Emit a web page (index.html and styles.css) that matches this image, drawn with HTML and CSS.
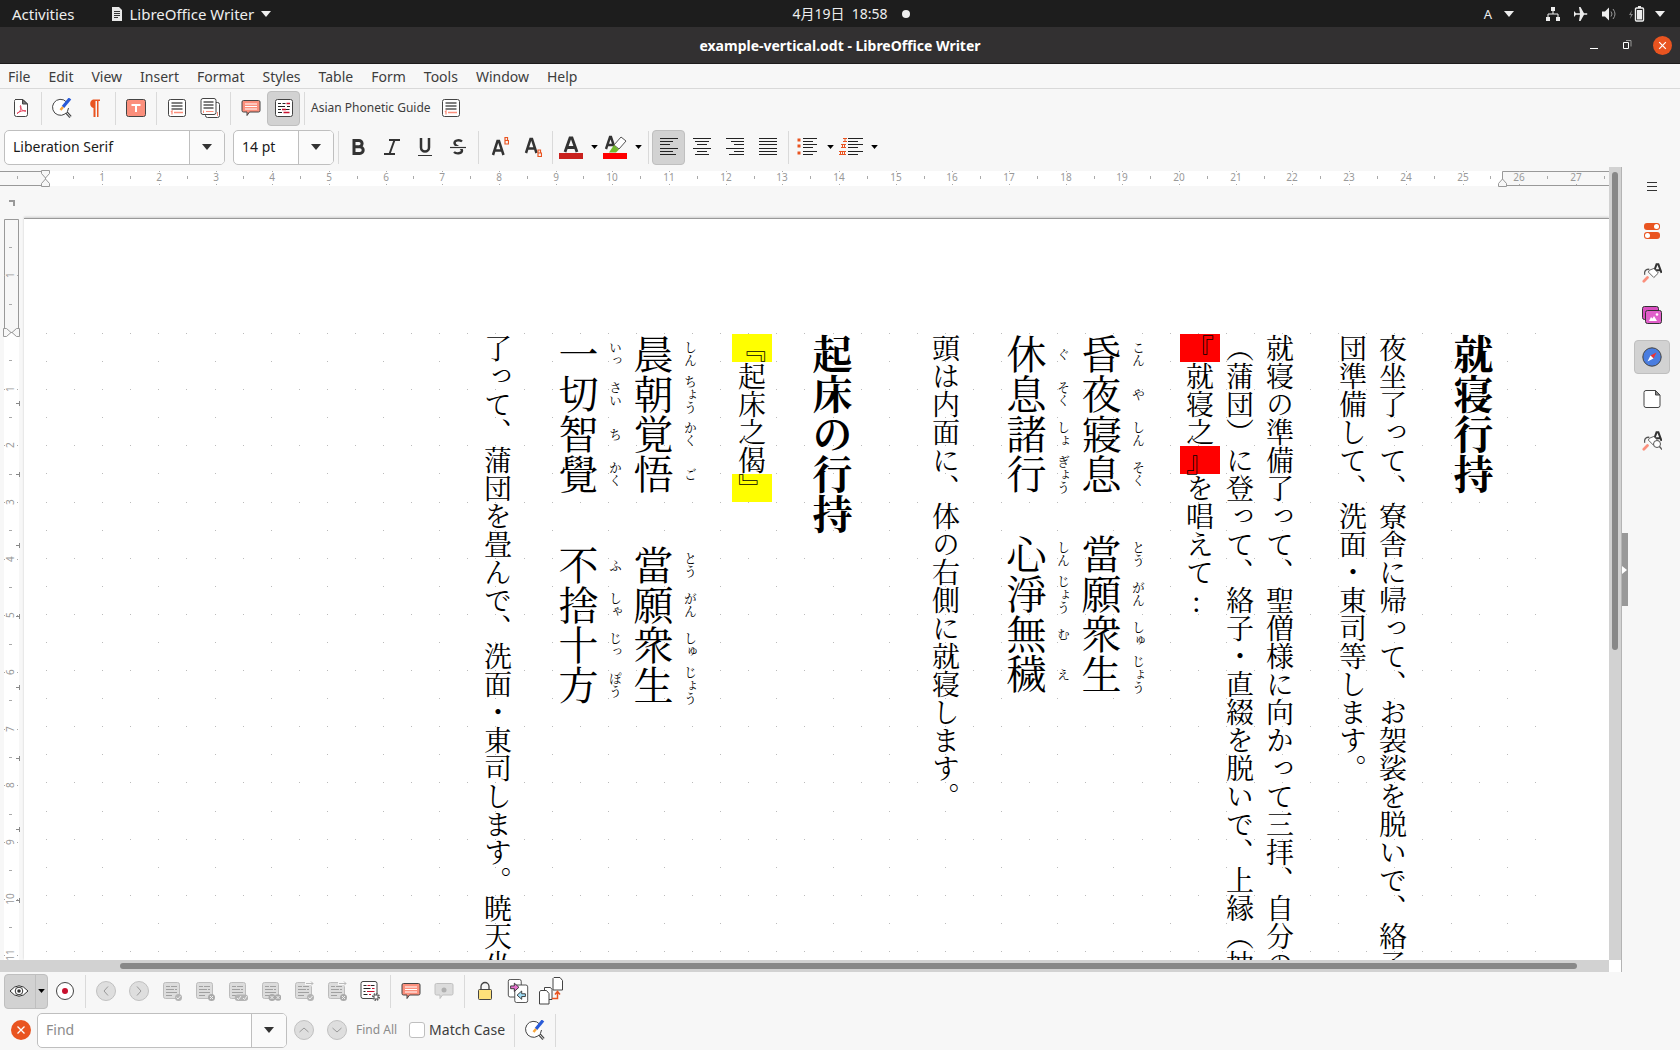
FILE: index.html
```html
<!DOCTYPE html>
<html lang="ja">
<head>
<meta charset="utf-8">
<title>example-vertical.odt - LibreOffice Writer</title>
<link rel="stylesheet" href="styles.css">
</head>
<body>
<svg class="defs" aria-hidden="true">
  <symbol id="i-pdf" viewBox="0 0 20 20"><path d="M4 1.500h8l4.500 4.500v10.500a2 2 0 0 1-2 2h-9a2 2 0 0 1-2-2v-13a2 2 0 0 1 1-2z" fill="#fff" stroke="#444"/><path d="M11.500 1.500v4.500h5z" fill="#777" stroke="#444"/><path d="M6 15.500c4-2 4.500-6 3.500-8c-1 2 1.500 6 5.500 5.500c-3-1-7 .5-9 2.500z" fill="none" stroke="#e33b57"/></symbol>
  <symbol id="i-find" viewBox="0 0 20 20"><path d="M14.500 4a8 8 0 1 0 2 6" fill="#fff" stroke="#444"/><path d="M14.500 14.500l4 4.500" stroke="#444" stroke-width="3"/><path d="M14.500 14.500l4 4.500" stroke="#eee" stroke-width="1"/><path d="M11 9l7-8.500" stroke="#2a5bd7" stroke-width="3.200"/><path d="M8.500 12l2.500-3" stroke="#f8a63a" stroke-width="2.500"/></symbol>
  <symbol id="i-pilcrow" viewBox="0 0 20 20"><path d="M8 1.500h7v1.500h-1.500v16h-1.500v-16h-1.500v16h-2v-9a4.500 4.500 0 0 1-.5-8.500z" fill="#e95420"/></symbol>
  <symbol id="i-textbox" viewBox="0 0 20 20"><rect x=".5" y="1.500" width="19" height="17" rx="2" fill="#fb8f7c" stroke="#444"/><path d="M5.500 7h9M10 7v7" stroke="#fff" stroke-width="2"/></symbol>
  <symbol id="i-footnote" viewBox="0 0 20 20"><rect x="1.500" y="1.500" width="17" height="17" rx="2" fill="#fff" stroke="#444"/><path d="M4.500 5h11M4.500 8h11M4.500 11h11" stroke="#000" stroke-width="1.200"/><path d="M4 14l1-1v3.500M7 14.500h9" stroke="#fb8f7c" stroke-width="1.300" fill="none"/></symbol>
  <symbol id="i-endnote" viewBox="0 0 20 20"><rect x="5.500" y="4.500" width="14" height="15" rx="2" fill="#fff" stroke="#444"/><rect x="1" y=".5" width="15" height="16" rx="2" fill="#fff" stroke="#444"/><path d="M3.500 4h10M3.500 7h10M3.500 10h10" stroke="#000" stroke-width="1.200"/><path d="M6 13.500h7.500M17.500 14v4M3.500 12.500v2.500" stroke="#fb8f7c"/></symbol>
  <symbol id="i-comment" viewBox="0 0 20 20"><path d="M2.500 2.500h15a1.500 1.500 0 0 1 1.500 1.500v8.500a1.500 1.500 0 0 1-1.500 1.500h-9l-2.500 3.500v-3.500h-3.500a1.500 1.500 0 0 1-1.500-1.500v-8.500a1.500 1.500 0 0 1 1.500-1.500z" fill="#fb8f7c" stroke="#444"/><path d="M4 6h12M4 8.500h12M4 11h12" stroke="#fff"/></symbol>
  <symbol id="i-commentoff" viewBox="0 0 20 20"><path d="M2.500 2.500h15a1.500 1.500 0 0 1 1.500 1.500v8.500a1.500 1.500 0 0 1-1.500 1.500h-9l-2.500 3.500v-3.500h-3.500a1.500 1.500 0 0 1-1.500-1.500v-8.500a1.500 1.500 0 0 1 1.500-1.500z" fill="#dcdcdc" stroke="#c0c0c0"/><circle cx="10" cy="9" r="2.500" fill="#b0b0b0"/></symbol>
  <symbol id="i-track" viewBox="0 0 20 20"><rect x="1.500" y="1.500" width="17" height="17" rx="2" fill="#fff" stroke="#444"/><path d="M4 5.500h3M8.500 5.500h3M4 8.500h7M13 8.500h3M4 11.500h3M8.500 11.500h7M4 14.500h4" stroke="#222" stroke-width="1.200"/><path d="M12.500 5.500h3.500M8 11.500h4M9.500 14.500h6" stroke="#c8102e" stroke-width="1.300"/></symbol>
  <symbol id="i-chg" viewBox="0 0 20 20"><rect x="1.500" y="1.500" width="16" height="16" rx="2" fill="#dcdcdc" stroke="#bcbcbc"/><path d="M4 5.500h4M9 5.500h6M4 8.500h8M13 8.500h2M4 11.500h11M4 14.500h6" stroke="#a0a0a0"/></symbol>
  <symbol id="i-b1" viewBox="0 0 20 20"><use href="#i-chg"/><circle cx="16.500" cy="16.500" r="3.500" fill="#b4b4b4"/><path d="M14.500 16.500l1.500 1.500l2.500-3" stroke="#eee" fill="none"/></symbol>
  <symbol id="i-b2" viewBox="0 0 20 20"><use href="#i-chg"/><circle cx="16.500" cy="16.500" r="3.500" fill="#aaa"/><path d="M15 15l3 3M18 15l-3 3" stroke="#eee"/></symbol>
  <symbol id="i-b3" viewBox="0 0 20 20"><use href="#i-chg"/><path d="M10 20a3.200 3.200 0 0 1 0-6.500h7a3.200 3.200 0 0 1 0 6.500z" fill="#b4b4b4"/><path d="M9 17l1.500 1.500 2.500-3.500M15 17l1.500 1.500 2.500-3.500" stroke="#eee" fill="none"/></symbol>
  <symbol id="i-b4" viewBox="0 0 20 20"><use href="#i-chg"/><circle cx="11" cy="16.500" r="3.500" fill="#aaa"/><circle cx="17" cy="16.500" r="3.300" fill="#aaa"/><path d="M9.500 15l3 3M12.500 15l-3 3M15.500 15l3 3M18.500 15l-3 3" stroke="#eee"/></symbol>
  <symbol id="i-b5" viewBox="0 0 20 20"><use href="#i-b1"/><path d="M11 2.500h8M17 .5l2.500 2-2.500 2" stroke="#f7f7f7" stroke-width="3" fill="none"/><path d="M12 2.500h7M17 .5l2 2-2 2" stroke="#bbb" fill="none"/></symbol>
  <symbol id="i-b6" viewBox="0 0 20 20"><use href="#i-b2"/><path d="M11 2.500h8M17 .5l2.500 2-2.500 2" stroke="#f7f7f7" stroke-width="3" fill="none"/><path d="M12 2.500h7M17 .5l2 2-2 2" stroke="#bbb" fill="none"/></symbol>
  <symbol id="i-manage" viewBox="0 0 20 20"><rect x="1" y=".5" width="16" height="17" rx="2" fill="#fff" stroke="#444"/><path d="M3.500 4.500h3M11 4.500h3.500M3.500 7.500h7M3.500 10.500h2M3.500 13.500h4" stroke="#222" stroke-width="1.200"/><path d="M7.500 4.500h3M12 7.500h2.500M7 10.500h7.500M9 13.500h2" stroke="#c8102e" stroke-width="1.200"/><circle cx="16" cy="16" r="3" fill="#ddd" stroke="#666" stroke-width="2" stroke-dasharray="1.500 .8"/><circle cx="16" cy="16" r="2" fill="#fff" stroke="#555" stroke-width=".8"/></symbol>
  <symbol id="i-bold" viewBox="0 0 20 20"><path d="M5 3.500h5a3 3 0 0 1 0 6.200h-5zM5 9.700h5.800a3.300 3.300 0 0 1 0 6.800h-5.800z" fill="none" stroke="#333" stroke-width="3"/></symbol>
  <symbol id="i-italic" viewBox="0 0 20 20"><path d="M7 3h11M2 17h11M12.500 3l-5 14" fill="none" stroke="#333" stroke-width="2"/></symbol>
  <symbol id="i-under" viewBox="0 0 20 20"><path d="M6 1v9.500a4 4 0 0 0 8 0v-9.500" fill="none" stroke="#333" stroke-width="2.500"/><path d="M3 18.500h14" stroke="#333"/></symbol>
  <symbol id="i-strike" viewBox="0 0 20 20"><path d="M14 4.500c-2-2-7.500-1.500-7.500 1.500 0 4 7.500 3.500 7.500 7.500 0 3.500-6 3.500-8 1.500" fill="none" stroke="#333" stroke-width="2.400"/><path d="M2 10.500h16" stroke="#f7f7f7" stroke-width="3"/><path d="M2 10.500h16" stroke="#333" stroke-width="1.200"/></symbol>
  <symbol id="i-sup" viewBox="0 0 20 20"><path d="M4 18l4.500-14h1.500l4.500 14M6 13.500h7" fill="none" stroke="#333" stroke-width="2.500"/><path d="M16 .5h2.500v3h-2.500zM16 3.500h3.500v3.500h-3.500z" fill="none" stroke="#e95420" stroke-width="1.200"/></symbol>
  <symbol id="i-sub" viewBox="0 0 20 20"><path d="M4 16l4.500-14h1.500l4.500 14M6 11.500h7" fill="none" stroke="#333" stroke-width="2.500"/><path d="M16 13h2.500v3h-2.500zM16 16h3.500v3.500h-3.500z" fill="none" stroke="#e95420" stroke-width="1.200"/></symbol>
  <symbol id="i-fcolor" viewBox="0 0 24 24"><path d="M6 17l5-14h2l5 14M8 12.500h8" fill="none" stroke="#333" stroke-width="2.800"/><path d="M0 18h24v6h-24z" fill="#c9211e"/></symbol>
  <symbol id="i-hcolor" viewBox="0 0 24 24"><path d="M3 14l4-12h1l4 12M4 10h7" fill="none" stroke="#333" stroke-width="2.400"/><path d="M11 10l7-8 5 4-7 8z" fill="#fff" stroke="#555"/><path d="M6 17.500l5-7.500 5 4.500-3 3z" fill="#73b82e"/><path d="M0 18h24v6h-24z" fill="#f00"/></symbol>
  <symbol id="i-al" viewBox="0 0 20 20"><path d="M1 1.500h18M1 4.500h13M1 7.500h10M1 11.500h18M1 14.500h13M1 17.500h16" stroke="#222"/></symbol>
  <symbol id="i-ac" viewBox="0 0 20 20"><path d="M1 1.500h18M3 4.500h14M5 7.500h10M1 11.500h18M5 14.500h10M3 17.500h14" stroke="#222"/></symbol>
  <symbol id="i-ar" viewBox="0 0 20 20"><path d="M1 1.500h18M6 4.500h13M9 7.500h10M1 11.500h18M9 14.500h10M4 17.500h15" stroke="#222"/></symbol>
  <symbol id="i-aj" viewBox="0 0 20 20"><path d="M1 1.500h18M1 4.500h18M1 7.500h18M1 11.500h18M1 14.500h18M1 17.500h18" stroke="#222"/></symbol>
  <symbol id="i-bul" viewBox="0 0 20 20"><path d="M6 1.500h14M6 4.500h10M6 7.500h14M6 10.500h10M6 14.500h14M6 17.500h10" stroke="#222"/><path d="M.5 1.500h3v3h-3zM.5 7.500h3v3h-3zM.5 14.500h3v3h-3z" fill="#e95420"/></symbol>
  <symbol id="i-num" viewBox="0 0 24 24"><path d="M9 3.500h15M9 6.500h10M9 9.500h15M9 12.500h10M9 16.500h15M9 19.500h10" stroke="#222"/><path d="M4 3.500h4M4 6.500h4M6 3.500v3M2 9.500h5M2 12.500h5M3.500 9.500v3M5.500 9.500v3M0 16.500h7M0 19.500h7M1.500 16.500v3M3.500 16.500v3M5.500 16.500v3" stroke="#e95420" fill="none"/></symbol>
  <symbol id="i-eye" viewBox="0 0 20 20"><path d="M1 10q9-10.500 18 0q-9 10.500-18 0z" fill="#fff" stroke="#333"/><circle cx="10" cy="10" r="3.800" fill="#fff" stroke="#333"/><circle cx="10" cy="10" r="1.800" fill="#333"/></symbol>
  <symbol id="i-rec" viewBox="0 0 20 20"><circle cx="10" cy="10" r="8.500" fill="#fff" stroke="#444"/><circle cx="10" cy="10" r="3" fill="#c8102e"/></symbol>
  <symbol id="i-left" viewBox="0 0 20 20"><circle cx="10" cy="10" r="9.500" fill="#dedede" stroke="#c0c0c0"/><path d="M12 5.500l-4 4.500 4 4.500" fill="none" stroke="#999"/></symbol>
  <symbol id="i-right" viewBox="0 0 20 20"><circle cx="10" cy="10" r="9.500" fill="#dedede" stroke="#c0c0c0"/><path d="M8 5.500l4 4.500-4 4.500" fill="none" stroke="#999"/></symbol>
  <symbol id="i-up" viewBox="0 0 20 20"><circle cx="10" cy="10" r="9.500" fill="#dedede" stroke="#c0c0c0"/><path d="M5.500 12l4.500-4 4.500 4" fill="none" stroke="#999"/></symbol>
  <symbol id="i-down" viewBox="0 0 20 20"><circle cx="10" cy="10" r="9.500" fill="#dedede" stroke="#c0c0c0"/><path d="M5.500 8l4.500 4 4.500-4" fill="none" stroke="#999"/></symbol>
  <symbol id="i-x" viewBox="0 0 20 20"><circle cx="10" cy="10" r="10" fill="#e95420"/><path d="M6.500 6.500l7 7M13.500 6.500l-7 7" stroke="#fff" stroke-width="1.300"/></symbol>
  <symbol id="i-lock" viewBox="0 0 20 20"><path d="M6 9v-3.500a4 4 0 0 1 8 0v3.500" fill="none" stroke="#444" stroke-width="1.300"/><rect x="3.500" y="8.500" width="13" height="10" rx="1" fill="#fde07a" stroke="#444"/></symbol>
  <symbol id="i-cmp" viewBox="0 0 24 26"><rect x="1.500" y=".5" width="14" height="19" rx="2" fill="#fff" stroke="#444"/><rect x="8.500" y="6.500" width="14" height="19" rx="2" fill="#fff" stroke="#444"/><path d="M4 7.500h4v-3l5 4.500-5 4.500v-3h-4z" fill="#e774cf" stroke="#333"/><path d="M20 16h-4v-3l-5 4.500 5 4.500v-3h4z" fill="#9fdcf5" stroke="#333"/></symbol>
  <symbol id="i-merge" viewBox="0 0 24 28"><path d="M15 .5h6l2.500 3v9.500h-9.500v-11.500z" fill="#fff" stroke="#444"/><path d="M5.500 10.500h6l1.500 2v10h-7.500z" fill="#fff" stroke="#444"/><path d="M1.500 13.500h6l2.500 3v10.500h-9.500v-12z" fill="#fff" stroke="#444"/><path d="M13 21.500h5.500v-7M16 17.500l2.500-3 2.500 3" fill="none" stroke="#e95420" stroke-width="1.500"/></symbol>
  <symbol id="i-tri" viewBox="0 0 10 6"><path d="M0 0h10l-5 6z" fill="currentColor"/></symbol>
  <symbol id="i-style" viewBox="0 0 22 22"><path d="M12.500 11l3.500-9.500h2l3.500 9.500M14 8h6" fill="none" stroke="#333" stroke-width="2.200"/><path d="M8 8l5-2 5 5-5 5-6-6z" fill="#fff" stroke="#555"/><path d="M8 7c-4-1-6 3-5 6" fill="none" stroke="#555" stroke-width="1.500"/><path d="M2 20l4-4" stroke="#fb8f7c" stroke-width="3" stroke-linecap="round"/></symbol>
</svg>

<header class="topbar">
  <div class="top-left">
    <button class="plain">Activities</button>
    <button class="plain app-menu"><svg width="12" height="14" viewBox="0 0 12 14"><path d="M1 0h7l3 3v11h-10z" fill="#e8e8e8"/><path d="M3 4.500h6M3 6.500h6M3 8.500h6M3 10.500h4" stroke="#333"/></svg>LibreOffice Writer<svg width="10" height="6"><use href="#i-tri"/></svg></button>
  </div>
  <div class="clock"><time>4月19日&nbsp; 18:58</time><i></i></div>
  <div class="top-right">
    <span>A</span><svg width="10" height="6"><use href="#i-tri"/></svg>
    <svg class="net" width="16" height="16" viewBox="0 0 16 16"><path d="M6 1h4v4h-4zM1 11h4v4h-4zM11 11h4v4h-4z" fill="#eee"/><path d="M8 5v3M3 11v-3h10v3" fill="none" stroke="#eee"/></svg>
    <svg width="16" height="16" viewBox="0 0 16 16"><path d="M1 5l2 2.300h4l-1-6.300h1.500l3.500 6.300h3a1 1 0 0 1 0 1.500h-3l-3.500 6.200h-1.500l1-6.200h-4l-2 2.200v-3z" fill="#eee"/></svg>
    <svg width="16" height="16" viewBox="0 0 16 16"><path d="M1 5.500h3l4-4v13l-4-4h-3z" fill="#eee"/><path d="M10 5.500q2 2.500 0 5M12 3q4 5 0 10" fill="none" stroke="#999"/></svg>
    <svg width="16" height="16" viewBox="0 0 16 16"><path d="M3 4l-3 5h2l-1 4 3-5h-2z" fill="#888"/><rect x="6.500" y="2" width="8" height="13" rx="1" fill="none" stroke="#eee" stroke-width="1.400"/><path d="M8 4h5v9.500h-5zM9 0h3v2h-3z" fill="#eee"/></svg>
    <svg class="last" width="10" height="6"><use href="#i-tri"/></svg>
  </div>
</header>

<div class="titlebar">
  <span></span>
  <h1>example-vertical.odt - LibreOffice Writer</h1>
  <div class="win-buttons">
    <button class="plain minimize" aria-label="Minimize"><svg width="8" height="10"><path d="M0 8.500h8" stroke="#fff"/></svg></button>
    <button class="plain" aria-label="Restore"><svg width="10" height="10"><path d="M.5 2.500h5v6h-5z" fill="none" stroke="#fff"/><path d="M3 .5h5v6" fill="none" stroke="#999"/></svg></button>
    <button class="plain" aria-label="Close"><svg width="19" height="19"><use href="#i-x"/></svg></button>
  </div>
</div>

<nav class="menubar">
  <button class="plain">File</button><button class="plain">Edit</button><button class="plain">View</button><button class="plain">Insert</button><button class="plain">Format</button><button class="plain">Styles</button><button class="plain">Table</button><button class="plain">Form</button><button class="plain">Tools</button><button class="plain">Window</button><button class="plain">Help</button>
</nav>

<div class="toolbar">
  <button class="tool" aria-label="Export as PDF"><svg><use href="#i-pdf"/></svg></button><hr>
  <button class="tool" aria-label="Find and Replace"><svg><use href="#i-find"/></svg></button>
  <button class="tool" aria-label="Formatting Marks"><svg><use href="#i-pilcrow"/></svg></button><hr>
  <button class="tool" aria-label="Text Box"><svg><use href="#i-textbox"/></svg></button><hr>
  <button class="tool" aria-label="Footnote"><svg><use href="#i-footnote"/></svg></button>
  <button class="tool" aria-label="Endnote"><svg><use href="#i-endnote"/></svg></button><hr>
  <button class="tool" aria-label="Comment"><svg><use href="#i-comment"/></svg></button>
  <button class="tool on" aria-label="Track Changes"><svg><use href="#i-track"/></svg></button><hr>
  <button class="plain phonetic">Asian Phonetic Guide</button>
  <button class="tool" aria-label="Footnote"><svg><use href="#i-footnote"/></svg></button>
</div>

<div class="toolbar tall">
  <div class="combo font"><input type="text" value="Liberation Serif" aria-label="Font Name"><button aria-label="Fonts"><svg width="10" height="6"><use href="#i-tri"/></svg></button></div>
  <div class="combo size"><input type="text" value="14 pt" aria-label="Font Size"><button aria-label="Sizes"><svg width="10" height="6"><use href="#i-tri"/></svg></button></div><hr>
  <button class="tool" aria-label="Bold"><svg><use href="#i-bold"/></svg></button>
  <button class="tool" aria-label="Italic"><svg><use href="#i-italic"/></svg></button>
  <button class="tool" aria-label="Underline"><svg><use href="#i-under"/></svg></button>
  <button class="tool" aria-label="Strikethrough"><svg><use href="#i-strike"/></svg></button><hr>
  <button class="tool" aria-label="Superscript"><svg><use href="#i-sup"/></svg></button>
  <button class="tool" aria-label="Subscript"><svg><use href="#i-sub"/></svg></button><hr>
  <button class="tool main" aria-label="Font Color"><svg class="big"><use href="#i-fcolor"/></svg></button><button class="drop" aria-label="Font Color menu"><svg width="7" height="4"><use href="#i-tri"/></svg></button>
  <button class="tool main" aria-label="Highlighting"><svg class="big"><use href="#i-hcolor"/></svg></button><button class="drop" aria-label="Highlighting menu"><svg width="7" height="4"><use href="#i-tri"/></svg></button><hr>
  <button class="tool on" aria-label="Align Left"><svg><use href="#i-al"/></svg></button>
  <button class="tool" aria-label="Center"><svg><use href="#i-ac"/></svg></button>
  <button class="tool" aria-label="Align Right"><svg><use href="#i-ar"/></svg></button>
  <button class="tool" aria-label="Justify"><svg><use href="#i-aj"/></svg></button><hr>
  <button class="tool main" aria-label="Bullets"><svg><use href="#i-bul"/></svg></button><button class="drop" aria-label="Bullets menu"><svg width="7" height="4"><use href="#i-tri"/></svg></button>
  <button class="tool main" aria-label="Numbering"><svg class="big"><use href="#i-num"/></svg></button><button class="drop" aria-label="Numbering menu"><svg width="7" height="4"><use href="#i-tri"/></svg></button>
</div>

<main class="workspace">
  <section class="editor">
    <div class="canvas">
      <svg class="hruler" id="hruler"></svg>
      <div class="tabtype"><svg width="8" height="8"><path d="M1 2h5v5" fill="none" stroke="#999" stroke-width="2"/></svg></div>
      <div class="lower">
        <svg class="vruler" id="vruler"></svg>
        <div class="page">
          <svg class="grid" id="grid"></svg>
          <article class="doc">
            <h2>就寝行持</h2>
            <p>夜坐了って、寮舎に帰って、お袈裟を脱いで、絡子<br>団準備して、洗面・東司等します。</p>
            <p class="intro">就寝の準備了って、聖僧様に向かって三拝、自分の<br>（蒲団）に登って、絡子・直綴を脱いで、上縁（抽<br><mark class="red"><span class="upright">『</span></mark>就寝之<mark class="red"><span class="upright">』</span></mark>を唱えて<span class="upright">: </span></p>
            <div class="verse">
              <p><ruby>昏<rt>こん</rt></ruby><ruby>夜<rt>や</rt></ruby><ruby>寢<rt>しん</rt></ruby><ruby>息<rt>そく</rt></ruby><span class="space"></span><ruby>當<rt>とう</rt></ruby><ruby>願<rt>がん</rt></ruby><ruby>衆<rt>しゅ</rt></ruby><ruby>生<rt>じょう</rt></ruby></p>
              <p><ruby>休<rt>ぐ</rt></ruby><ruby>息<rt>そく</rt></ruby><ruby>諸<rt>しょ</rt></ruby><ruby>行<rt>ぎょう</rt></ruby><span class="space"></span><ruby>心<rt>しん</rt></ruby><ruby>淨<rt>じょう</rt></ruby><ruby>無<rt>む</rt></ruby><ruby>穢<rt>え</rt></ruby></p>
            </div>
            <p class="ending">頭は内面に、体の右側に就寝します。</p>
            <h2>起床の行持</h2>
            <p class="intro"><mark class="yellow">『</mark>起床之偈<mark class="yellow">』</mark></p>
            <div class="verse loose">
              <p><ruby>晨<rt>しん</rt></ruby><ruby>朝<rt>ちょう</rt></ruby><ruby>覚<rt>かく</rt></ruby><ruby>悟<rt>ご</rt></ruby><span class="space"></span><ruby>當<rt>とう</rt></ruby><ruby>願<rt>がん</rt></ruby><ruby>衆<rt>しゅ</rt></ruby><ruby>生<rt>じょう</rt></ruby></p>
              <p><ruby>一<rt>いっ</rt></ruby><ruby>切<rt>さい</rt></ruby><ruby>智<rt>ち</rt></ruby><ruby>覺<rt>かく</rt></ruby><span class="space"></span><ruby>不<rt>ふ</rt></ruby><ruby>捨<rt>しゃ</rt></ruby><ruby>十<rt>じっ</rt></ruby><ruby>方<rt>ぽう</rt></ruby></p>
            </div>
            <p>了って、蒲団を畳んで、洗面・東司します。暁天坐</p>
          </article>
        </div>
      </div>
    </div>
    <div class="vscroll"><i></i></div>
    <div class="hscroll"><i></i></div>
    <div class="corner"></div>
  </section>
  <button class="splitter" aria-label="Hide sidebar"><svg width="5" height="8"><path d="M0 0l5 4-5 4z" fill="#fff"/></svg></button>
  <aside class="sidebar">
    <button class="tool settings" aria-label="Sidebar Settings"><svg><path d="M5 5.500h10M5 9.500h10M5 13.500h10" stroke="#333"/></svg></button>
    <button class="tool" aria-label="Properties"><svg><rect x="2" y="2" width="16" height="7" rx="3" fill="#e95420"/><rect x="2" y="11" width="16" height="7" rx="3" fill="#e95420"/><circle cx="14.500" cy="5.500" r="2.500" fill="#fff"/><circle cx="5.500" cy="14.500" r="2.500" fill="#fff"/></svg></button>
    <button class="tool" aria-label="Styles"><svg><use href="#i-style"/></svg></button>
    <button class="tool" aria-label="Gallery"><svg><rect x=".5" y="1.500" width="16" height="13" rx="2" fill="#d94fc0" stroke="#333"/><rect x="3.500" y="5.500" width="16" height="13" rx="2" fill="#e05fca" stroke="#333"/><path d="M7 16l2-4 1.500 1.500 1.500-2.500 3 5z" fill="#fff"/><circle cx="15" cy="9.500" r="1.300" fill="#fff"/></svg></button>
    <button class="tool on" aria-label="Navigator"><svg><circle cx="10" cy="10" r="9.200" fill="#4a7de0" stroke="#444"/><path d="M14.500 5.500l-3 6-3-3z" fill="#e33"/><path d="M5.500 14.500l3-6 3 3z" fill="#fff"/></svg></button>
    <button class="tool" aria-label="Page"><svg><path d="M4 1.500h9.500l4.500 4.500v10.500a2 2 0 0 1-2 2h-12a2 2 0 0 1-2-2v-13a2 2 0 0 1 2-2z" fill="#fff" stroke="#444"/><path d="M13.500 1.500v4.500h4.500z" fill="#888" stroke="#444"/></svg></button>
    <button class="tool" aria-label="Style Inspector"><svg><use href="#i-style"/><circle cx="15" cy="13" r="3.500" fill="#fff" stroke="#555"/><path d="M17.500 15.500l2.500 3" stroke="#555" stroke-width="1.300"/></svg></button>
  </aside>
</main>

<div class="toolbar">
  <div class="split"><button class="tool main" aria-label="Show Changes"><svg><use href="#i-eye"/></svg></button><button class="drop" aria-label="Show Changes menu"><svg width="7" height="4"><use href="#i-tri"/></svg></button></div>
  <button class="tool" aria-label="Record Changes"><svg><use href="#i-rec"/></svg></button><hr>
  <button class="tool" aria-label="Previous"><svg><use href="#i-left"/></svg></button>
  <button class="tool" aria-label="Next"><svg><use href="#i-right"/></svg></button>
  <button class="tool" aria-label="Accept"><svg><use href="#i-b1"/></svg></button>
  <button class="tool" aria-label="Reject"><svg><use href="#i-b2"/></svg></button>
  <button class="tool" aria-label="Accept All"><svg><use href="#i-b3"/></svg></button>
  <button class="tool" aria-label="Reject All"><svg><use href="#i-b4"/></svg></button>
  <button class="tool" aria-label="Accept and Next"><svg><use href="#i-b5"/></svg></button>
  <button class="tool" aria-label="Reject and Next"><svg><use href="#i-b6"/></svg></button>
  <button class="tool" aria-label="Manage Changes"><svg><use href="#i-manage"/></svg></button><hr>
  <button class="tool" aria-label="Insert Comment"><svg><use href="#i-comment"/></svg></button>
  <button class="tool" aria-label="Comment Change"><svg><use href="#i-commentoff"/></svg></button><hr>
  <button class="tool" aria-label="Protect"><svg><use href="#i-lock"/></svg></button>
  <button class="tool" aria-label="Compare"><svg class="big"><use href="#i-cmp"/></svg></button>
  <button class="tool" aria-label="Merge"><svg class="merge"><use href="#i-merge"/></svg></button>
</div>

<div class="toolbar tall">
  <button class="tool" aria-label="Close Find Bar"><svg><use href="#i-x"/></svg></button>
  <div class="combo find"><input type="text" placeholder="Find" aria-label="Find"><button aria-label="Find history"><svg width="10" height="6"><use href="#i-tri"/></svg></button></div>
  <button class="tool" aria-label="Find Previous"><svg><use href="#i-up"/></svg></button>
  <button class="tool" aria-label="Find Next"><svg><use href="#i-down"/></svg></button>
  <button class="plain findall" disabled>Find All</button>
  <label class="match"><input type="checkbox">Match Case</label><hr>
  <button class="tool" aria-label="Find and Replace"><svg><use href="#i-find"/></svg></button><hr>
</div>
<script src="rulers.js"></script>
</body>
</html>
```
FILE: styles.css
```css
* { box-sizing: border-box; }
body {
  margin: 0;
  height: 100vh;
  display: flex;
  flex-direction: column;
  overflow: hidden;
  background: #f7f7f7;
  color: #3d3d3d;
  font: 14px/20px "Noto Sans", "Noto Sans CJK JP", sans-serif;
}
button, input { font: inherit; color: inherit; }
button { border: 0; padding: 0; background: none; }
svg { display: block; flex: none; }
.defs { position: absolute; width: 0; height: 0; }
.plain { white-space: nowrap; }

.topbar {
  flex: none;
  height: 27px;
  display: grid;
  grid-template-columns: 1fr auto 1fr;
  align-items: center;
  background: #1d1d1d;
  color: #eee;
}
.top-left { display: flex; gap: 36px; padding-left: 12px; font-size: 15px; }
.app-menu { display: flex; align-items: center; gap: 7px; }
.clock { display: flex; align-items: center; gap: 14px; padding-left: 22px; }
.clock i { width: 8px; height: 8px; border-radius: 50%; background: #eee; }
.top-right { display: flex; align-items: center; justify-content: flex-end; gap: 12px; padding-right: 15px; }
.top-right span { font-size: 13px; }
.net { margin-left: 19px; }
.last { margin-left: -2px; }

.titlebar {
  flex: none;
  height: 37px;
  display: grid;
  grid-template-columns: 1fr auto 1fr;
  align-items: center;
  background: #323031;
  border-bottom: 1px solid #1d1b1c;
  color: #fff;
}
.titlebar h1 { margin: 0; padding-top: 1px; font-size: 14px; font-weight: 700; }
.win-buttons { display: flex; align-items: center; justify-content: flex-end; gap: 20px; padding-right: 8px; }
.minimize { margin-right: 5px; }

.menubar {
  flex: none;
  height: 25px;
  display: flex;
  gap: 18px;
  padding: 2px 0 0 8px;
  border-bottom: 1px solid #d9d9d9;
}

.toolbar {
  flex: none;
  height: 38px;
  display: flex;
  align-items: center;
  padding-left: 4px;
}
.tall { height: 40px; }
.toolbar hr {
  flex: none;
  width: 1px;
  height: 33px;
  margin: 0 3px 0 4px;
  border: 0;
  background: #dadada;
}
.tool {
  flex: none;
  width: 33px;
  height: 35px;
  display: flex;
  align-items: center;
  justify-content: center;
}
.tool svg { width: 20px; height: 20px; }
.tool svg.big { width: 24px; height: 24px; }
.tool svg.merge { width: 24px; height: 28px; }
.tool.on { background: #d2d2d2; border: 1px solid #bfbfbf; border-radius: 4px; }
.main { width: 32px; padding-right: 3px; }
.drop { width: 12px; height: 35px; display: flex; align-items: center; justify-content: center; color: #000; }
.phonetic { margin: 0 4px 0 3px; font-size: 12px; }

.combo {
  flex: none;
  height: 35px;
  display: flex;
  border: 1px solid #bfbfbf;
  border-radius: 5px;
  background: #fff;
  overflow: hidden;
  color: #1a1a1a;
}
.combo input { flex: 1; min-width: 0; border: 0; padding: 0 8px; background: none; outline: 0; }
.combo input::placeholder { color: #8b8b8b; }
.combo button { width: 35px; border-left: 1px solid #bfbfbf; background: #fafafa; display: flex; align-items: center; justify-content: center; color: #333; }
.font { width: 221px; margin-right: 8px; }
.size { width: 101px; }

.workspace { flex: 1; min-height: 0; display: flex; }
.editor {
  flex: 1;
  min-width: 0;
  display: grid;
  grid-template-columns: 1fr 12px;
  grid-template-rows: 1fr 12px;
  border-right: 1px solid #b4b4b4;
}
.canvas { min-width: 0; min-height: 0; display: flex; flex-direction: column; overflow: hidden; }
.hruler { width: 100%; height: 22px; }
.tabtype { height: 25px; padding: 10px 0 0 8px; }
.lower { flex: 1; min-height: 0; display: flex; }
.vruler { width: 24px; height: 100%; }
.page {
  flex: 1;
  min-width: 0;
  position: relative;
  overflow: hidden;
  background: #fff;
  border-top: 1px solid #999;
  margin-top: 4px;
  box-shadow: 0 -1px 2px #ccc;
}
.grid { position: absolute; inset: 0; width: 100%; height: 100%; }
.doc {
  position: relative;
  writing-mode: vertical-rl;
  width: 100%;
  height: 1400px;
  padding: 115px 107px 0 0;
  color: #000;
  font: 400 28px/40px "Noto Serif CJK JP", "Noto Sans CJK JP", sans-serif;
  text-spacing-trim: space-all;
}
.doc p, .doc h2 { margin: 0; white-space: pre; }
.doc h2 { font-size: 40px; font-weight: 700; line-height: 57px; margin-left: 32px; }
.doc p { margin-left: 33px; }
.doc .intro { margin-left: 23px; }
.doc .ending { margin-left: 65px; }

/* each line of a verse stacks its characters, with the reading to the right of each one */
.verse { font-size: 40px; line-height: 38px; margin-left: 41px; }
.doc .verse p { display: flex; margin: 0; }
.verse ruby {
  flex: none;
  height: 40px;
  display: flex;
  flex-direction: column-reverse;
  justify-content: flex-end;
  align-items: center;
}
.verse rt { display: block; font-size: 13px; line-height: 37px; }
.space { flex: none; height: 40px; }
.loose .space { height: 51px; }

.upright { text-combine-upright: all; }
mark { color: inherit; }
.red { background: #f00; }
.yellow { background: #ff0; }

.vscroll { background: #d2d2d2; padding: 5px 3px; }
.vscroll i { display: block; width: 6px; height: 61%; border-radius: 3px; background: #888; }
.hscroll { background: #d2d2d2; padding: 3px 32px 3px 120px; }
.hscroll i { display: block; height: 6px; border-radius: 3px; background: #888; }
.corner { background: #fff; }
.splitter {
  flex: none;
  width: 6px;
  height: 73px;
  margin-top: 366px;
  background: #999;
  display: flex;
  align-items: center;
}
.sidebar { flex: none; width: 52px; padding: 3px 10px 0 6px; }
.sidebar .tool { width: 36px; height: 34px; margin-bottom: 8px; }
.sidebar .settings { margin-bottom: 10px; }

.split { display: flex; border: 1px solid #bfbfbf; border-radius: 4px; background: #d2d2d2; }
.split .tool, .split .drop { height: 33px; }
.split .tool { width: 30px; }
.split .drop { border-left: 1px solid #bfbfbf; }
.find { width: 250px; }
.findall { margin: 0 12px 0 3px; font-size: 12px; color: #8b8b8b; }
.match { display: flex; align-items: center; gap: 4px; margin-right: 5px; white-space: nowrap; }
.match input { appearance: none; width: 16px; height: 16px; margin: 0; border: 1px solid #bfbfbf; border-radius: 3px; background: #fff; }
```
FILE: rulers.js
```js
const CM = 56.68;
const NS = 'http://www.w3.org/2000/svg';

function add(parent, name, attrs, text) {
  const el = document.createElementNS(NS, name);
  for (const key in attrs) el.setAttribute(key, attrs[key]);
  if (text !== undefined) el.textContent = text;
  parent.appendChild(el);
}

const rect = (p, x, y, width, height, fill) =>
  add(p, 'rect', { x: Math.round(x), y: Math.round(y), width, height, fill });
const label = (p, x, y, text, turn) =>
  add(p, 'text', {
    x, y, fill: '#999', 'font-size': 10, 'text-anchor': 'middle',
    transform: turn ? `rotate(-90 ${x} ${y})` : ''
  }, text);
const outline = (p, d) => add(p, 'path', { d, fill: '#f7f7f7', stroke: '#999' });

/* horizontal ruler: the text area starts at 45px and ends 107px before the right edge */
const h = document.getElementById('hruler');
const width = h.clientWidth;
const right = width - 107;
rect(h, 45, 4, right - 45, 15, '#fff');
outline(h, 'M-1 4.500H45.500V18.500H-1');
outline(h, `M${width + 1} 4.500H${right + 0.5}V18.500H${width + 1}`);
for (let i = -1; i * CM + 45 < width; i++) {
  if (i > 0) {
    const x = 45.500 + i * CM;
    label(h, Math.round(x), 14, i);
    rect(h, x, 4, 1, 1, '#aaa');
    rect(h, x, 17, 1, 1, '#aaa');
  }
  rect(h, 45 + (i + 0.5) * CM, 9, 1, 3, '#aaa');
}
outline(h, 'M41.500 3.500h8v3l-4 4.500l-4-4.500zM41.500 19.500h8v-3l-4-4.500l-4 4.500z');
outline(h, `M${right - 3.5} 19.500h8v-3l-4-4.500l-4 4.500z`);

/* vertical ruler: origin 118px below its top */
const v = document.getElementById('vruler');
const height = v.clientHeight;
rect(v, 4, 118, 15, height, '#fff');
outline(v, 'M4.500 5.500H18.500V118.500H4.500z');
for (let i = -1.5; i * CM + 118 < height; i += 0.5) {
  const y = 118 + i * CM;
  if (i === 0) continue;
  if (Number.isInteger(i)) {
    label(v, 14, Math.round(y), Math.abs(i), true);
    rect(v, 17, y, 1, 1, '#aaa');
    rect(v, 4, y, 1, 1, '#aaa');
  } else rect(v, 9, y, 3, 1, '#aaa');
}
for (let y = 189; y < height; y += 71) {
  rect(v, 16, y, 4, 1, '#888');
  rect(v, 19, y - 2, 1, 5, '#888');
}
outline(v, 'M3.500 114.500v8h3l4.500-4l-4.500-4zM19.500 114.500v8h-3l-4.500-4l4.500-4z');

/* snap grid */
const g = document.getElementById('grid');
const STEP = 28.090;
for (let r = 0; r * STEP + 114 < g.clientHeight; r++)
  for (let c = 0; c < 54; c += r % 2 ? 2 : 1)
    rect(g, 22 + c * STEP, 114 + r * STEP, 1, 1, '#bbb');
```
